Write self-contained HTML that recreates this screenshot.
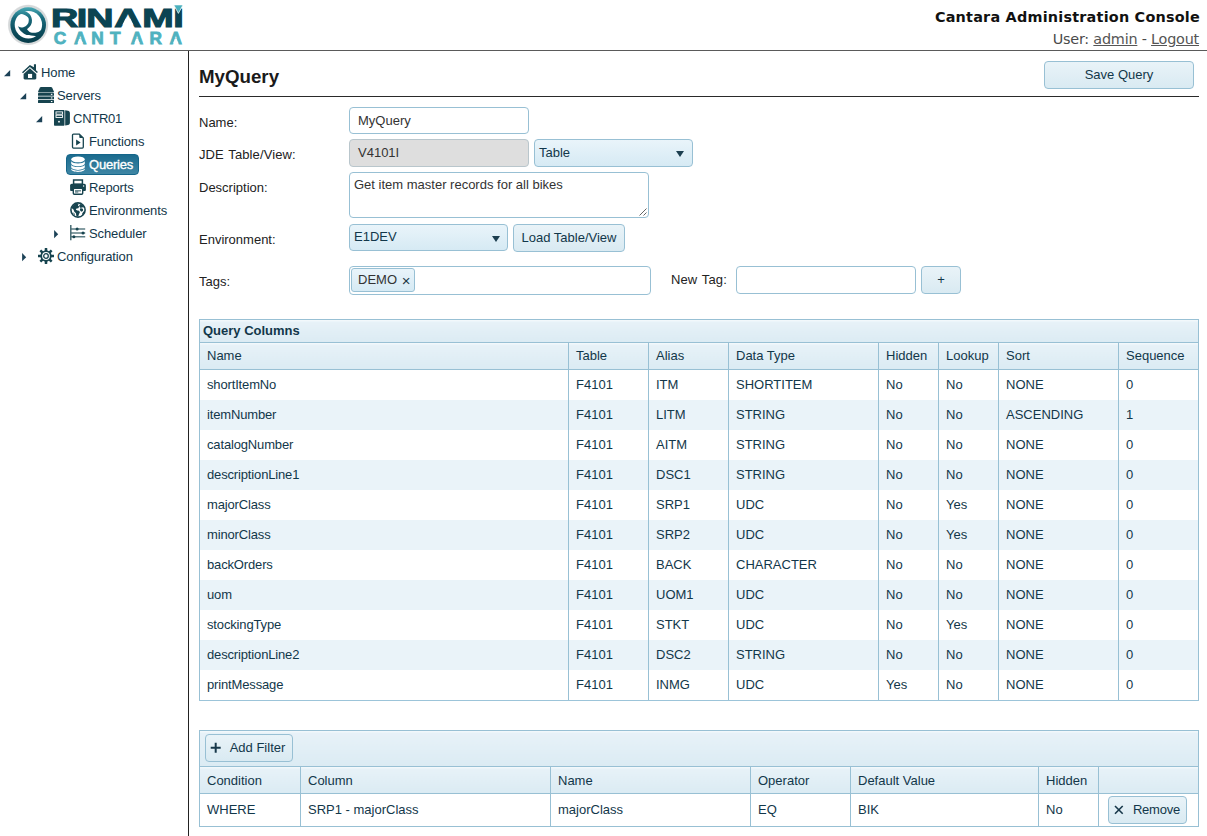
<!DOCTYPE html>
<html><head><meta charset="utf-8"><title>Cantara Administration Console</title>
<style>
*{box-sizing:border-box}
html,body{margin:0;padding:0;width:1207px;height:836px;overflow:hidden;background:#fff}
body{font-family:"Liberation Sans",Arial,sans-serif;font-size:13px;color:#222}
#hdr{position:absolute;left:0;top:0;width:1207px;height:51px;border-bottom:1px solid #5a5a5a}
#side{position:absolute;left:0;top:0;width:189px;height:836px}
#side:after{content:"";position:absolute;left:188px;top:51px;width:1px;height:785px;background:#222}
#main{position:absolute;left:0;top:0;width:1207px;height:836px}
.abs{position:absolute}
#ttl1{right:7px;top:8px;font-family:"DejaVu Sans",Verdana,sans-serif;font-weight:bold;font-size:14.4px;line-height:18px;letter-spacing:.22px;color:#111;white-space:nowrap}
#ttl2{right:8px;top:30px;font-family:"DejaVu Sans",Verdana,sans-serif;font-size:14.4px;letter-spacing:-.22px;line-height:18px;color:#4a4a4a;white-space:nowrap}
#ttl2 u{color:#555}
.tl{height:16px;line-height:16px;font-size:13px;letter-spacing:-.12px;color:#12374a;white-space:nowrap}
.tl.tsel{color:#fff;letter-spacing:-.2px;-webkit-text-stroke:.35px #fff}
.selbox{border-radius:4px;background:linear-gradient(#1b6b8e,#3f86a4);border:1px solid #15668a}
#side svg{display:block}
h3{position:absolute;margin:0;left:199px;top:66px;font-size:18.72px;line-height:22px;font-weight:bold;color:#1a1a1a}
.lbl{position:absolute;font-size:13px;line-height:16px;color:#222;white-space:nowrap}
.inp{position:absolute;border:1px solid #98c0d4;border-radius:4px;background:#fff;font-size:13px;color:#333;white-space:nowrap}
.btn{position:absolute;border:1px solid #98c0d4;border-radius:4px;background:linear-gradient(#e9f3f8,#d9eaf2);font-size:13px;color:#12374a;text-align:center;white-space:nowrap}
.sel{position:absolute;border:1px solid #98c0d4;border-radius:4px;background:linear-gradient(#e9f4fa,#d6eaf4);font-size:13px;color:#12374a;white-space:nowrap}
.dd{position:absolute;width:0;height:0;border-left:4px solid transparent;border-right:4px solid transparent;border-top:6px solid #1c3f50}
.tag{position:absolute;left:1px;top:1px;height:24px;width:64px;border:1px solid #98c0d4;border-radius:3px;background:linear-gradient(#e9f4fa,#d6eaf4);line-height:22px;padding-left:6px;font-size:13px;color:#333}
.tag .x{font-size:15px;line-height:10px;color:#1f3a47;position:relative;top:2px;left:1px}
table{position:absolute;border-collapse:collapse;table-layout:fixed;font-size:13px;color:#12374a}
td,th{border:1px solid #98c0d4;padding:0 0 0 7px;text-align:left;font-weight:normal;white-space:nowrap;overflow:hidden}
th{background:linear-gradient(#e8f2f8,#dbebf3);box-shadow:inset 0 2px 0 -0.500px #f2f8fb}
tr.cap th{height:23px;font-weight:bold;padding-left:3px;padding-bottom:2px}
tr.hd th{height:27px;padding-bottom:1px}
tr.r td{height:30px;border-top:none;border-bottom:none}
tr.r.alt td{background:#eaf3f9}
#t1 td:first-child{letter-spacing:-.15px}
#t1 tr:last-child td{height:31px;border-bottom:1px solid #9cc4d9}
tr.tb th{height:36px;position:relative}
#t2 tr.hd th{height:27px;padding-bottom:0}
tr.r2 td{height:33px;position:relative;padding-bottom:2px}
.addf{left:5px;top:3px;width:88px;height:28px;line-height:26px;padding-left:17px}
.rmb{left:9px;top:2px;width:79px;height:28px;line-height:26px;padding-left:18px;letter-spacing:-.2px}
</style></head><body>
<div id="hdr">
<svg class="abs" id="logo" style="left:0;top:0" width="190" height="50" viewBox="0 0 190 50">
<defs>
<linearGradient id="lg" gradientUnits="userSpaceOnUse" x1="0" y1="7" x2="0" y2="43"><stop offset="0" stop-color="#47aab6"/><stop offset=".3" stop-color="#1a6c7d"/><stop offset=".65" stop-color="#0d4f5f"/><stop offset="1" stop-color="#073c49"/></linearGradient>
<radialGradient id="rg"><stop offset=".94" stop-color="#d6d9da"/><stop offset="1" stop-color="#d4d7d8" stop-opacity="0"/></radialGradient>
</defs>
<circle cx="28.1" cy="24.9" r="20.7" fill="url(#rg)"/>
<circle cx="28.2" cy="25.1" r="17.8" fill="url(#lg)"/>
<circle cx="28.4" cy="24.7" r="13.7" fill="#fff"/>
<path d="M23.74 11.06C24.24 11.21 25.63 11.31 26.73 11.96C27.82 12.61 29.44 13.56 30.32 14.95C31.19 16.35 31.89 18.64 31.99 20.33C32.09 22.03 31.74 23.62 30.91 25.12C30.09 26.61 27.67 28.61 27.03 29.31C27.67 29.85 29.17 32.10 30.91 32.60C32.66 33.09 35.60 32.84 37.49 32.30C39.39 31.75 41.08 30.00 42.28 29.31C43.47 28.61 44.27 28.31 44.67 28.11L38.09 38.88C37.59 38.41 36.99 36.71 35.10 36.06C33.21 35.42 29.12 35.82 26.73 34.99C24.33 34.16 22.19 32.55 20.75 31.10C19.30 29.66 18.50 27.11 18.06 26.32C18.60 26.52 20.10 27.51 21.34 27.51C22.59 27.51 24.33 27.21 25.53 26.32C26.73 25.42 28.12 23.62 28.52 22.13C28.92 20.63 29.02 18.69 27.92 17.34C26.83 16.00 23.79 14.20 21.94 14.06C20.10 13.91 17.71 16.05 16.86 16.45L15 14L22 9Z" fill="url(#lg)"/>
<g transform="scale(1.47,1)"><text x="34.62 52.25 58.60 77.76 96.77 117.93" y="26.8" font-family="'Liberation Sans',Arial,sans-serif" font-weight="bold" font-size="25.7" fill="#0b4452" stroke="#0b4452" stroke-width="1">RINAMI</text><polygon points="83.33,24.79 90.75,24.79 88.81,18.77 85.27,18.77" fill="#fff"/></g>
<path d="M173.8 4.900h9.200l-4.600 8.500z" fill="#49b0bd" stroke="#fff" stroke-width=".7"/>
<text x="53.65 73.90 91.15 110.00 130.80 149.50 169.50" y="44.3" font-family="'Liberation Sans',Arial,sans-serif" font-weight="bold" font-size="17.3" fill="#4fb2bf" stroke="#4fb2bf" stroke-width=".8">CANTARA</text>
<polygon points="77.72,42.95 82.58,42.95 81.27,38.89 79.02,38.89" fill="#fff"/><polygon points="134.62,42.95 139.48,42.95 138.17,38.89 135.92,38.89" fill="#fff"/><polygon points="173.32,42.95 178.18,42.95 176.87,38.89 174.62,38.89" fill="#fff"/>
</svg>
<div class="abs" id="ttl1">Cantara Administration Console</div>
<div class="abs" id="ttl2">User: <u>admin</u> - <u>Logout</u></div>
</div>
<div id="side"><svg class="abs" style="left:4px;top:70px" width="7" height="7" viewBox="0 0 7 7"><path d="M6.200 0v6.200H0z" fill="#1c4257"/></svg><div class="abs" style="left:22px;top:64px;width:16px;height:16px"><svg width="16" height="16" viewBox="0 0 16 16"><path d="M7.900 .9L0 8.200l1 1.100 6.900-6.300 7 6.100 1-1.100-1.900-1.700V.3h-2.100v2.900z" fill="#17444f"/><path d="M7.900 4.300L1.600 9.900v4.300c0 .7.500 1.200 1.200 1.200h10.300c.7 0 1.200-.5 1.200-1.200V9.900z" fill="#17444f"/><rect x="6" y="9.900" width="4.100" height="4.100" fill="#fff"/></svg></div><div class="abs tl" style="left:41px;top:65px">Home</div><svg class="abs" style="left:20px;top:93px" width="7" height="7" viewBox="0 0 7 7"><path d="M6.200 0v6.200H0z" fill="#1c4257"/></svg><div class="abs" style="left:38px;top:87px;width:16px;height:16px"><svg width="16" height="16" viewBox="0 0 16 16"><path d="M3.100 0h9.800c.6 0 1 .3 1.300.8l1.700 3.700c.1.400-.1.900-.6.900H.7c-.5 0-.7-.5-.6-.9L1.800.8C2.100.3 2.500 0 3.100 0z" fill="#17444f"/><rect x="0" y="6" width="16" height="2.700" rx=".5" fill="#17444f"/><rect x="0" y="9.500" width="16" height="2.800" rx=".5" fill="#17444f"/><rect x="0" y="13.100" width="16" height="2.900" rx=".5" fill="#17444f"/><rect x="12.900" y="6.800" width="1.500" height="1.100" fill="#fff"/><rect x="12.900" y="10.400" width="1.500" height="1.100" fill="#fff"/><rect x="12.900" y="14" width="1.500" height="1.100" fill="#fff"/></svg></div><div class="abs tl" style="left:57px;top:88px">Servers</div><svg class="abs" style="left:36px;top:116px" width="7" height="7" viewBox="0 0 7 7"><path d="M6.200 0v6.200H0z" fill="#1c4257"/></svg><div class="abs" style="left:54px;top:110px;width:16px;height:16px"><svg width="16" height="16" viewBox="0 0 16 16"><path d="M1 0h8.500c.6 0 1 .4 1 1v13.800c0 .6-.4 1-1 1H1c-.6 0-1-.4-1-1V1c0-.6.400-1 1-1z" fill="#17444f"/><path d="M11.200 .3l2.800.5c1.100.2 1.900 1.100 1.900 2.200v9.800c0 1.100-.8 2-1.900 2.200l-2.800.5z" fill="#17444f"/><rect x="2" y="1.900" width="6.500" height="2.300" fill="none" stroke="#fff" stroke-width=".9"/><rect x="2" y="5.200" width="6.500" height="2.300" fill="none" stroke="#fff" stroke-width=".9"/><circle cx="5" cy="11.700" r=".9" fill="#fff"/></svg></div><div class="abs tl" style="left:73px;top:111px;letter-spacing:-.25px">CNTR01</div><div class="abs" style="left:70px;top:133px;width:16px;height:16px"><svg width="16" height="16" viewBox="0 0 16 16"><path d="M3.500 1.100h5.800l4 4v9c0 .6-.4 1-1 1H3.500c-.6 0-1-.4-1-1v-12c0-.6.400-1 1-1z" fill="#fff" stroke="#17444f" stroke-width="1.300"/><path d="M9.300 1.100v3c0 .6.400 1 1 1h3z" fill="#17444f"/><path d="M6.100 6.600v5.800l4.500-2.900z" fill="#17444f"/></svg></div><div class="abs tl" style="left:89px;top:134px">Functions</div><div class="abs selbox" style="left:66px;top:154px;width:73px;height:21px"></div><div class="abs" style="left:70px;top:156px;width:16px;height:16px"><svg width="16" height="16" viewBox="0 0 16 16"><ellipse cx="8" cy="3.400" rx="6.800" ry="2.900" fill="#fff"/><path d="M1.200 5.300c1 1.400 3.700 2.200 6.800 2.200s5.800-.8 6.800-2.200v2.200c0 1.500-3 2.800-6.800 2.800S1.200 9 1.200 7.500z" fill="#fff"/><path d="M1.200 8.900c1 1.400 3.700 2.200 6.800 2.200s5.800-.8 6.800-2.200v2.200c0 1.500-3 2.800-6.800 2.800s-6.800-1.300-6.800-2.800z" fill="#fff"/><path d="M1.200 12.500c1 1.400 3.700 2.200 6.800 2.200s5.800-.8 6.800-2.200v.8c0 1.500-3 2.600-6.800 2.600s-6.800-1.100-6.800-2.600z" fill="#fff"/></svg></div><div class="abs tl tsel" style="left:89px;top:157px">Queries</div><div class="abs" style="left:70px;top:179px;width:16px;height:16px"><svg width="16" height="16" viewBox="0 0 16 16"><path d="M3.600 .9h8.800v4.400H3.600z" fill="#fff" stroke="#17444f" stroke-width="1.500"/><path d="M1.800 4.800h12.400c1 0 1.700.8 1.700 1.700v4.600c0 .5-.4.900-.9.900H1c-.5 0-.9-.4-.9-.9V6.500c0-1 .8-1.700 1.700-1.700z" fill="#17444f"/><circle cx="13.600" cy="7" r=".7" fill="#fff"/><rect x="3.300" y="9.400" width="9.400" height="5.800" rx="1" fill="#fff" stroke="#17444f" stroke-width="1.400"/><path d="M5 11h6v1.500H8.300v1.300H5z" fill="#17444f" opacity=".6"/></svg></div><div class="abs tl" style="left:89px;top:180px">Reports</div><div class="abs" style="left:70px;top:202px;width:16px;height:16px"><svg width="16" height="16" viewBox="0 0 16 16"><circle cx="8" cy="8" r="7.100" fill="#fff" stroke="#17444f" stroke-width="1.600"/><path d="M2.300 4.200C3.500 2.500 5.400 1.500 7.400 1.400L8.600 2l-.7 1.500 1.300 1-.8 1.700-1.900.2-.7 1.300 1.600.7 1.800.4.700 1.700-.9 1.500-.6 2.100-1.200.4-1-1.100-.2-2.200-1.700-1.400-.8-2.200-1.700-1.300c0-.8.200-1.500.5-2.100z" fill="#17444f"/><path d="M10.300 2l2.300 1 1.500 2-.5.500-2-.2-.3 1.100 1.600.4.200 1.700-1.300 1.300-1.400-.7-.6-1.800 1-1.400-1.300-.9-.3-1.500z" fill="#17444f"/><path d="M13.400 9.500l.9.300-.8 2.300-1.400 1.200.2-1.900z" fill="#17444f"/><path d="M3 10.200l1.500 1.300.5 1.800-1-.8z" fill="#17444f"/></svg></div><div class="abs tl" style="left:89px;top:203px">Environments</div><svg class="abs" style="left:54px;top:230px" width="5" height="9" viewBox="0 0 5 9"><path d="M.1 .1L4.200 4.200.1 8.300z" fill="#1c4257"/></svg><div class="abs" style="left:70px;top:225px;width:16px;height:16px"><svg width="16" height="16" viewBox="0 0 16 16"><path d="M.8 0v15.200" stroke="#17444f" stroke-width="1.400" fill="none" opacity=".85"/><path d="M1.200 3.900H15.200M1.200 8.100H15.200M1.200 11.700H15.200" stroke="#17444f" stroke-width="1.500" fill="none" opacity=".7"/><circle cx="7.100" cy="3.900" r="1.500" fill="#17444f"/><circle cx="13" cy="8.100" r="1.500" fill="#17444f"/><circle cx="3.900" cy="11.700" r="1.500" fill="#17444f"/></svg></div><div class="abs tl" style="left:89px;top:226px">Scheduler</div><svg class="abs" style="left:22px;top:253px" width="5" height="9" viewBox="0 0 5 9"><path d="M.1 .1L4.200 4.200.1 8.300z" fill="#1c4257"/></svg><div class="abs" style="left:38px;top:248px;width:16px;height:16px"><svg width="16" height="16" viewBox="0 0 16 16"><path d="M6.79 -0.01L9.21 -0.01L9.35 2.46L10.96 3.13L12.81 1.48L14.52 3.19L12.87 5.04L13.54 6.65L16.01 6.79L16.01 9.21L13.54 9.35L12.87 10.96L14.52 12.81L12.81 14.52L10.96 12.87L9.35 13.54L9.21 16.01L6.79 16.01L6.65 13.54L5.04 12.87L3.19 14.52L1.48 12.81L3.13 10.96L2.46 9.35L-0.01 9.21L-0.01 6.79L2.46 6.65L3.13 5.04L1.48 3.19L3.19 1.48L5.04 3.13L6.65 2.46Z" fill="#17444f"/><circle cx="8" cy="8" r="3.900" fill="#fff"/><circle cx="8" cy="8" r="2.300" fill="none" stroke="#17444f" stroke-width="1.300"/></svg></div><div class="abs tl" style="left:57px;top:249px">Configuration</div></div>
<div id="main">
<h3>MyQuery</h3>
<div class="abs" style="left:199px;top:96px;width:1000px;height:1px;background:#2a2a2a"></div>
<div class="btn" style="left:1044px;top:61px;width:150px;height:28px;line-height:26px">Save Query</div>
<div class="lbl" style="left:199px;top:115px">Name:</div><div class="lbl" style="left:199px;top:147px;word-spacing:1px;letter-spacing:.1px">JDE Table/View:</div><div class="lbl" style="left:199px;top:179.5px">Description:</div><div class="lbl" style="left:199px;top:231.5px">Environment:</div><div class="lbl" style="left:199px;top:273.5px">Tags:</div><div class="lbl" style="left:671px;top:272px;word-spacing:1px;letter-spacing:.12px">New Tag:</div><div class="inp" style="left:349px;top:107px;width:180px;height:27px;line-height:25px;padding-left:8px">MyQuery</div>
<div class="inp" style="left:349px;top:139px;width:180px;height:28px;line-height:25px;padding-left:8px;background:#dedede;border-color:#b9c6cc">V4101I</div>
<div class="sel" style="left:534px;top:139px;width:159px;height:28px;line-height:25px;padding-left:4px">Table<span class="dd" style="left:141px;top:11px"></span></div>
<div class="inp" style="left:349px;top:172px;width:300px;height:46px;line-height:16px;padding:4px 0 0 4px;border-radius:4px">Get item master records for all bikes<svg class="abs" style="right:1px;bottom:1px" width="10" height="10" viewBox="0 0 10 10"><path d="M9.500 2.500L2.500 9.500M9.500 6.500L6.500 9.500" stroke="#666" stroke-width="1"/></svg></div>
<div class="sel" style="left:349px;top:224px;width:159px;height:27px;line-height:24px;padding-left:4px">E1DEV<span class="dd" style="left:142px;top:11px"></span></div>
<div class="btn" style="left:513px;top:224px;width:112px;height:28px;line-height:25px">Load Table/View</div>
<div class="inp" style="left:349px;top:266px;width:302px;height:29px"><div class="tag">DEMO <span class="x">×</span></div></div>
<div class="inp" style="left:736px;top:266px;width:180px;height:28px"></div>
<div class="btn" style="left:921px;top:266px;width:40px;height:28px;line-height:25px">+</div>
<table id="t1" style="left:199px;top:319px;width:1000px"><colgroup><col style="width:369px"><col style="width:80px"><col style="width:80px"><col style="width:150px"><col style="width:60px"><col style="width:60px"><col style="width:120px"><col style="width:80px"></colgroup><tr class="cap"><th colspan="8">Query Columns</th></tr><tr class="hd"><th>Name</th><th>Table</th><th>Alias</th><th>Data Type</th><th>Hidden</th><th>Lookup</th><th>Sort</th><th>Sequence</th></tr><tr class="r"><td>shortItemNo</td><td>F4101</td><td>ITM</td><td>SHORTITEM</td><td>No</td><td>No</td><td>NONE</td><td>0</td></tr><tr class="r alt"><td>itemNumber</td><td>F4101</td><td>LITM</td><td>STRING</td><td>No</td><td>No</td><td>ASCENDING</td><td>1</td></tr><tr class="r"><td>catalogNumber</td><td>F4101</td><td>AITM</td><td>STRING</td><td>No</td><td>No</td><td>NONE</td><td>0</td></tr><tr class="r alt"><td>descriptionLine1</td><td>F4101</td><td>DSC1</td><td>STRING</td><td>No</td><td>No</td><td>NONE</td><td>0</td></tr><tr class="r"><td>majorClass</td><td>F4101</td><td>SRP1</td><td>UDC</td><td>No</td><td>Yes</td><td>NONE</td><td>0</td></tr><tr class="r alt"><td>minorClass</td><td>F4101</td><td>SRP2</td><td>UDC</td><td>No</td><td>Yes</td><td>NONE</td><td>0</td></tr><tr class="r"><td>backOrders</td><td>F4101</td><td>BACK</td><td>CHARACTER</td><td>No</td><td>No</td><td>NONE</td><td>0</td></tr><tr class="r alt"><td>uom</td><td>F4101</td><td>UOM1</td><td>UDC</td><td>No</td><td>No</td><td>NONE</td><td>0</td></tr><tr class="r"><td>stockingType</td><td>F4101</td><td>STKT</td><td>UDC</td><td>No</td><td>Yes</td><td>NONE</td><td>0</td></tr><tr class="r alt"><td>descriptionLine2</td><td>F4101</td><td>DSC2</td><td>STRING</td><td>No</td><td>No</td><td>NONE</td><td>0</td></tr><tr class="r"><td>printMessage</td><td>F4101</td><td>INMG</td><td>UDC</td><td>Yes</td><td>No</td><td>NONE</td><td>0</td></tr></table><table id="t2" style="left:199px;top:730px;width:1000px"><colgroup><col style="width:101px"><col style="width:250px"><col style="width:200px"><col style="width:100px"><col style="width:188px"><col style="width:60px"><col style="width:100px"></colgroup><tr class="tb"><th colspan="7"><div class="btn addf"><svg class="abs" style="left:4.400px;top:7px" width="12" height="12" viewBox="0 0 12 12"><path d="M5.700 .7v10M.7 5.700h10" stroke="#17384a" stroke-width="2" fill="none"/></svg>Add Filter</div></th></tr><tr class="hd"><th>Condition</th><th>Column</th><th>Name</th><th>Operator</th><th>Default Value</th><th>Hidden</th><th></th></tr><tr class="r2"><td>WHERE</td><td>SRP1 - majorClass</td><td>majorClass</td><td>EQ</td><td>BIK</td><td>No</td><td class="rm"><div class="btn rmb"><svg class="abs" style="left:5.300px;top:8px" width="10" height="10" viewBox="0 0 10 10"><path d="M1 1l7.700 7.700M8.700 1L1 8.700" stroke="#17384a" stroke-width="1.600" fill="none"/></svg>Remove</div></td></tr></table></div>
</body></html>
